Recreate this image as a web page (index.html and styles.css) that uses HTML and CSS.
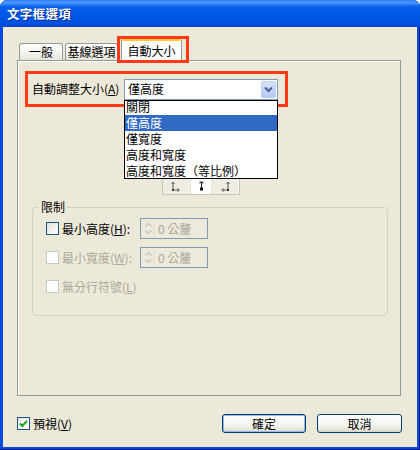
FILE: index.html
```html
<!DOCTYPE html>
<html lang="zh-Hant">
<head>
<meta charset="utf-8">
<title>文字框選項</title>
<link rel="stylesheet" href="styles.css">
</head>
<body>
<div class="window">
  <div class="titlebar"><span class="title">文字框選項</span></div>
  <div class="client">
    <div class="tabs">
      <div class="tab tab-general">一般</div>
      <div class="tab tab-baseline">基線選項</div>
      <div class="tab tab-active">自動大小</div>
      <div class="mark mark-tab"></div>
    </div>
    <div class="panel">
      <div class="autorow">
        <span class="autolabel">自動調整大小(<u>A</u>)</span>
        <div class="combo">
          <span class="combo-text">僅高度</span>
          <span class="dropbtn">
            <svg width="15" height="17" viewBox="0 0 15 17"><path d="M4 6.5 L7.5 10 L11 6.5" fill="none" stroke="#4D6185" stroke-width="2"/></svg>
          </span>
          <ul class="list">
            <li class="item first">關閉</li>
            <li class="item selected">僅高度</li>
            <li class="item">僅寬度</li>
            <li class="item">高度和寬度</li>
            <li class="item">高度和寬度（等比例）</li>
          </ul>
        </div>
      </div>
      <div class="anchors">
        <span class="cell cell-btn">
          <svg width="11" height="11" viewBox="0 0 11 11"><path d="M3 1.5 V8 M1.5 3 L3 1.2 L4.5 3 M4.5 9 H9 M7.5 7.5 L9.3 9 L7.5 10.5" fill="none" stroke="#555" stroke-width="1"/><rect x="2" y="8" width="2" height="2" fill="#333"/></svg>
        </span>
        <span class="cell cell-white">
          <svg width="11" height="11" viewBox="0 0 11 11"><path d="M5.5 1 V7 M3.5 1 H7.5" fill="none" stroke="#222" stroke-width="1"/><path d="M4 2.5 L5.5 1 L7 2.5" fill="none" stroke="#222"/><rect x="4" y="6.5" width="3" height="3" fill="#111"/></svg>
        </span>
        <span class="cell cell-btn">
          <svg width="11" height="11" viewBox="0 0 11 11"><path d="M8 1.5 V8 M6.5 3 L8 1.2 L9.5 3 M6.5 9 H2 M3.5 7.5 L1.7 9 L3.5 10.5" fill="none" stroke="#555" stroke-width="1"/><rect x="7" y="8" width="2" height="2" fill="#333"/></svg>
        </span>
      </div>
      <div class="group">
        <div class="group-title">限制</div>
        <div class="grow">
          <span class="chk chk-on"></span>
          <span class="glabel">最小高度(<u>H</u>):</span>
          <span class="spin">
            <span class="spin-arrows">
              <svg width="9" height="15" viewBox="0 0 9 15"><path d="M1.5 5.5 L4.5 2.5 L7.5 5.5 M1.5 9.5 L4.5 12.5 L7.5 9.5" fill="none" stroke="#C5C2B2" stroke-width="1.2"/></svg>
            </span>
            <span class="spin-text">0 公釐</span>
          </span>
        </div>
        <div class="grow disabled">
          <span class="chk chk-off"></span>
          <span class="glabel">最小寬度(<u>W</u>):</span>
          <span class="spin">
            <span class="spin-arrows">
              <svg width="9" height="15" viewBox="0 0 9 15"><path d="M1.5 5.5 L4.5 2.5 L7.5 5.5 M1.5 9.5 L4.5 12.5 L7.5 9.5" fill="none" stroke="#C5C2B2" stroke-width="1.2"/></svg>
            </span>
            <span class="spin-text">0 公釐</span>
          </span>
        </div>
        <div class="grow disabled">
          <span class="chk chk-off"></span>
          <span class="glabel">無分行符號(<u>L</u>)</span>
        </div>
      </div>
    </div>
    <div class="footer">
      <span class="chk chk-checked">
        <svg width="11" height="11" viewBox="0 0 11 11"><path d="M2 5.5 L4.3 8 L9 2.8" fill="none" stroke="#21A121" stroke-width="2"/></svg>
      </span>
      <span class="preview">預視(<u>V</u>)</span>
      <div class="buttons">
        <button class="btn btn-default">確定</button>
        <button class="btn">取消</button>
      </div>
    </div>
  </div>
</div>
</body>
</html>
```

FILE: styles.css
```css
html, body {
  margin: 0;
  padding: 0;
  background: #ffffff;
}

body {
  font-family: "Noto Sans CJK TC", "Liberation Sans", sans-serif;
  font-size: 12px;
  color: #000;
}

u {
  text-decoration: underline;
  text-underline-offset: 1px;
}

.window {
  width: 420px;
  height: 450px;
  box-sizing: border-box;
  display: flex;
  flex-direction: column;
  background: #0A4BDD;
  border-radius: 7px 7px 0 0;
  overflow: hidden;
  box-shadow: inset -1px 0 #00138C, inset 0 -1px #00138C;
}

.titlebar {
  height: 27px;
  flex: none;
  display: flex;
  align-items: center;
  padding-left: 7px;
  background: linear-gradient(#2E7EF5 0%, #4A98FF 10%, #0A5FEA 25%, #0056E6 55%, #0053E2 85%, #0046D0 100%);
}

.title {
  color: #fff;
  font-weight: bold;
  font-size: 12.5px;
  line-height: 14px;
  text-shadow: 1px 1px #0A2A8F;
  letter-spacing: 0.3px;
}

.client {
  flex: 1;
  margin: 0 3px 3px 3px;
  background: #ECE9D8;
  display: flex;
  flex-direction: column;
}

/* Tabs */
.tabs {
  position: relative;
  display: flex;
  align-items: flex-end;
  height: 22px;
  margin-top: 11px;
  padding-left: 16px;
}

.tab {
  box-sizing: border-box;
  height: 17px;
  line-height: 16px;
  text-align: center;
  border: 1px solid #919B9C;
  border-bottom: none;
  border-radius: 3px 3px 0 0;
  background: linear-gradient(#FFFFFF, #F4F3EE 55%, #E6E4DA);
}

.tab-general { width: 44px; margin-right: 2px; }
.tab-baseline { width: 53px; }

.tab-active {
  position: relative;
  z-index: 2;
  width: 61px;
  height: 23px;
  margin-left: 3px;
  margin-bottom: -1px;
  line-height: 19px;
  background: #FCFCFE;
  border-top: 3px solid #FFC83C;
}

.mark {
  position: absolute;
  box-sizing: border-box;
  border: 3px solid #FF3A16;
  z-index: 3;
}

.mark-tab {
  left: 114px;
  top: -2px;
  width: 72px;
  height: 27px;
}

/* Panel */
.panel {
  box-sizing: border-box;
  width: 384px;
  height: 336px;
  margin-left: 14px;
  border: 1px solid #919B9C;
  background: #ECE9D8;
  box-shadow: inset 1px 1px #FFFFFF;
  display: flex;
  flex-direction: column;
  align-items: flex-start;
}

.autorow {
  box-sizing: border-box;
  width: 263px;
  height: 36px;
  margin: 10px 0 0 7px;
  border: 3px solid #FF3A16;
  display: flex;
  align-items: center;
  padding-left: 4px;
}

.autolabel {
  width: 92px;
  line-height: 14px;
}

.combo {
  position: relative;
  box-sizing: border-box;
  width: 154px;
  height: 21px;
  border: 1px solid #7F9DB9;
  background: #fff;
  display: flex;
  align-items: center;
  padding-left: 3px;
}

.combo-text {
  line-height: 14px;
}

.dropbtn {
  position: absolute;
  right: 1px;
  top: 1px;
  width: 15px;
  height: 17px;
  box-sizing: border-box;
  border: 1px solid #BCCEF5;
  border-radius: 2px;
  background: linear-gradient(#D6E3FC, #C1D3FB 60%, #B4C9F6);
  display: flex;
}

.dropbtn svg { margin: -1px; }

.list {
  position: absolute;
  z-index: 5;
  left: -1px;
  top: 20px;
  width: 154px;
  height: 79px;
  box-sizing: border-box;
  margin: 0;
  padding: 0;
  list-style: none;
  background: #fff;
  border: 1px solid #000;
  overflow: hidden;
}

.item {
  height: 16px;
  line-height: 16px;
  padding-left: 1px;
  white-space: nowrap;
}

.item.first { margin-top: -2px; }

.item.selected {
  background: #316AC5;
  color: #fff;
}

/* Anchors */
.anchors {
  display: flex;
  align-items: stretch;
  height: 17px;
  margin: 71px 0 0 144px;
  border: 1px solid #C8C5B4;
  border-top: none;
  box-sizing: border-box;
  width: 78px;
  background: #ECE9D8;
}

.cell {
  display: flex;
  align-items: center;
  justify-content: center;
}

.cell-btn {
  width: 26px;
  background: #EFEDE3;
  border-right: 1px solid #F8F7F2;
}

.cell-white {
  width: 22px;
  margin: 0 2px;
  background: #fff;
}

/* Group */
.group {
  box-sizing: border-box;
  width: 356px;
  height: 109px;
  margin: 12px 0 0 14px;
  border: 1px solid #D0D0BF;
  border-radius: 4px;
  display: flex;
  flex-direction: column;
  gap: 8px;
}

.group-title {
  align-self: flex-start;
  margin: -8px 0 -4px 6px;
  padding: 0 2px;
  line-height: 14px;
  background: #ECE9D8;
}

.grow {
  display: flex;
  align-items: center;
  height: 21px;
  padding-left: 13px;
}

.glabel {
  width: 78px;
  margin-left: 3px;
  line-height: 14px;
  white-space: nowrap;
}

.disabled { color: #ACA899; }

.chk {
  box-sizing: border-box;
  width: 13px;
  height: 13px;
  flex: none;
  display: flex;
  align-items: center;
  justify-content: center;
}

.chk-on {
  border: 1px solid #1C5180;
  background: linear-gradient(135deg, #DCDCD7, #F6F6F3 70%, #FFFFFF);
}

.chk-off {
  border: 1px solid #CAC8BB;
  background: #fff;
}

.chk-checked {
  border: 1px solid #1C5180;
  background: linear-gradient(135deg, #E0E0DA, #FBFBF9 60%, #FFFFFF);
}

.spin {
  box-sizing: border-box;
  width: 68px;
  height: 21px;
  border: 1px solid #7F9DB9;
  background: #EDEADB;
  display: flex;
  align-items: center;
  padding-left: 2px;
  color: #ACA899;
}

.spin-arrows {
  display: flex;
  width: 10px;
  height: 17px;
  align-items: center;
  justify-content: center;
  border-right: 1px solid #E2DFD0;
}

.spin-text {
  margin-left: 4px;
  line-height: 14px;
}

/* Footer */
.footer {
  display: flex;
  align-items: center;
  margin-top: 18px;
  padding: 0 15px 0 14px;
  height: 19px;
}

.preview {
  margin-left: 3px;
  line-height: 14px;
}

.buttons {
  margin-left: auto;
  display: flex;
  gap: 11px;
}

.btn {
  box-sizing: border-box;
  width: 84px;
  height: 19px;
  padding: 0;
  font-family: "Noto Sans CJK TC", "Liberation Sans", sans-serif;
  font-size: 12px;
  line-height: 14px;
  color: #000;
  border: 1px solid #003C74;
  border-radius: 3px;
  background: linear-gradient(#FFFFFF, #F4F4F0 60%, #E3E1D7 90%, #D6D0C5);
}

.btn + .btn { width: 85px; }

.btn-default {
  box-shadow: inset 0 0 0 1px #98B8EE;
}
```
